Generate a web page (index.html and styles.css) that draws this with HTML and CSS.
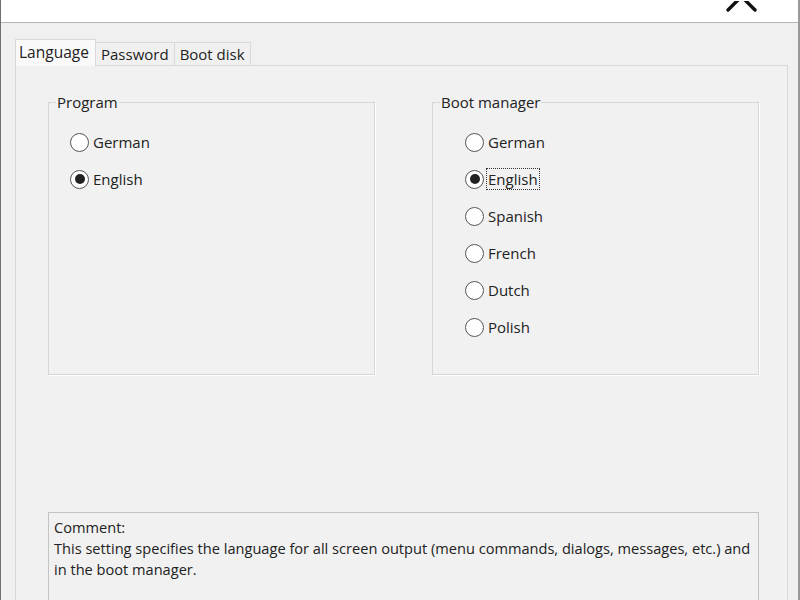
FILE: index.html
```html
<!DOCTYPE html>
<html lang="en">

<head>
  <meta charset="UTF-8">
  <title>Settings</title>
  <link rel="stylesheet" href="styles.css">
</head>

<body>

  <div class="window">
    <div class="titlebar">
      <svg class="close" width="40" height="22" viewBox="0 0 40 22">
        <path d="M4 9 L31 -18 M4 -18 L31 9" stroke="#111" stroke-width="3.4" stroke-linecap="round" fill="none"/>
      </svg>
    </div>

    <div class="client">
      <div class="tabs">
        <div class="tab active">Language</div>
        <div class="tab">Password</div>
        <div class="tab">Boot disk</div>
      </div>

      <div class="panel">
        <div class="groups">
          <fieldset class="group">
            <legend>Program</legend>
            <div class="options">
              <label class="radio"><span class="dot"></span>German</label>
              <label class="radio"><span class="dot checked"></span>English</label>
            </div>
          </fieldset>

          <fieldset class="group">
            <legend>Boot manager</legend>
            <div class="options options-wide">
              <label class="radio"><span class="dot"></span>German</label>
              <label class="radio"><span class="dot checked"></span><span class="focus">English</span></label>
              <label class="radio"><span class="dot"></span>Spanish</label>
              <label class="radio"><span class="dot"></span>French</label>
              <label class="radio"><span class="dot"></span>Dutch</label>
              <label class="radio"><span class="dot"></span>Polish</label>
            </div>
          </fieldset>
        </div>

        <div class="comment">
          Comment:<br>
          This setting specifies the language for all screen output (menu commands, dialogs, messages, etc.) and
          in the boot manager.
        </div>
      </div>
    </div>
  </div>

</body>

</html>
```

FILE: styles.css
```css
html,
body {
  margin: 0;
  height: 600px;
  overflow: hidden;
}

body {
  font-family: "Open Sans", Arial, sans-serif;
  font-size: 15px;
  color: #222;
  background: #f0f0f0;
}

.window {
  height: 600px;
  border-left: 1px solid #707070;
  border-right: 2px solid #9a9a9a;
  display: flex;
  flex-direction: column;
}

.titlebar {
  height: 22px;
  background: #fff;
  border-bottom: 1px solid #b4b4b4;
  display: flex;
  justify-content: flex-end;
  padding-right: 34px;
}

.close {
  display: block;
  margin-top: 1px;
}

.client {
  flex: 1;
  padding: 16px 10px 0 14px;
  display: flex;
  flex-direction: column;
}

/* tab strip */
.tabs {
  display: flex;
  align-items: flex-end;
  height: 26px;
}

.tab {
  height: 23px;
  line-height: 22px;
  padding: 0 5px 0 5px;
  border: 1px solid #d9d9d9;
  border-bottom: none;
  border-left: none;
  background: #f0f0f0;
  white-space: nowrap;
  box-sizing: border-box;
}

.tab.active {
  width: 81px;
  height: 27px;
  line-height: 24px;
  padding: 0 0 0 3px;
  font-size: 15.5px;
  background: #f9f9f9;
  border-left: 1px solid #d9d9d9;
  position: relative;
  z-index: 1;
  margin-bottom: -1px;
}

.panel {
  flex: 1;
  border: 1px solid #d9d9d9;
  border-bottom: none;
  background: #f1f1f1;
  padding: 26px 27px 0 32px;
  display: flex;
  flex-direction: column;
}

.groups {
  display: flex;
  gap: 57px;
}

/* group boxes */
.group {
  margin: 0;
  padding: 0;
  width: 327px;
  height: 283px;
  box-sizing: border-box;
  border: 1px solid #d6d6d6;
  box-shadow: 1px 1px 0 #fff;
}

.group legend {
  padding: 0 1px;
  margin-left: 7px;
  line-height: 20px;
}

.options {
  display: flex;
  flex-direction: column;
  gap: 15px;
  padding: 19px 0 0 21px;
}

.options-wide {
  padding-left: 32px;
}

.radio {
  display: flex;
  align-items: center;
  gap: 4px;
  height: 22px;
}

.dot {
  width: 19px;
  height: 19px;
  box-sizing: border-box;
  border: 1.5px solid #555;
  border-radius: 50%;
  background: #fff;
  display: flex;
  align-items: center;
  justify-content: center;
}

.dot.checked::after {
  content: "";
  width: 10px;
  height: 10px;
  border-radius: 50%;
  background: #222;
}

.focus {
  outline: 1px dotted #333;
  padding: 0 1px;
  margin-left: -1px;
}

/* comment box */
.comment {
  margin-top: 137px;
  width: 711px;
  flex: 1;
  box-sizing: border-box;
  border: 1px solid #c3c3c3;
  border-bottom: none;
  padding: 4px 0 0 5px;
  line-height: 21px;
  font-size: 14.6px;
}
```
